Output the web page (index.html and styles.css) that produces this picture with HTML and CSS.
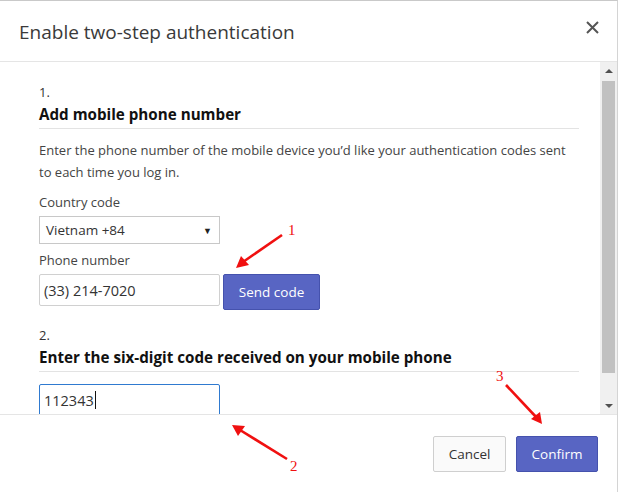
FILE: index.html
```html
<!DOCTYPE html>
<html>
<head>
<meta charset="utf-8">
<link rel="stylesheet" href="styles.css">
</head>
<body>
<div class="modal">
  <div class="modal-header">
    <h1 class="modal-title">Enable two-step authentication</h1>
    <span class="close">
      <svg width="13" height="13" viewBox="0 0 13 13"><path d="M1 1 L12 12 M12 1 L1 12" stroke="#555" stroke-width="2" fill="none"/></svg>
    </span>
  </div>
  <div class="modal-body-wrap">
    <div class="modal-body">
      <div class="step">
        <div class="step-num">1.</div>
        <h2 class="step-title">Add mobile phone number</h2>
        <p class="desc">Enter the phone number of the mobile device you’d like your authentication codes sent to each time you log in.</p>
        <div class="field field-country">
          <label class="label">Country code</label>
          <div class="select"><span>Vietnam +84</span><span class="caret">▼</span></div>
        </div>
        <div class="field field-phone">
          <label class="label">Phone number</label>
          <div class="row">
            <div class="input">(33) 214-7020</div>
            <button class="btn btn-primary btn-send">Send code</button>
          </div>
        </div>
      </div>
      <div class="step step2">
        <div class="step-num">2.</div>
        <h2 class="step-title">Enter the six-digit code received on your mobile phone</h2>
        <div class="input input-focus">112343<span class="cursor"></span></div>
      </div>
    </div>
    <div class="scrollbar">
      <div class="sb-arrow">
        <svg width="8" height="4" viewBox="0 0 8 4"><path d="M0 4 L4 0 L8 4 Z" fill="#505050"/></svg>
      </div>
      <div class="sb-track"><div class="sb-thumb"></div></div>
      <div class="sb-arrow">
        <svg width="8" height="4" viewBox="0 0 8 4"><path d="M0 0 L4 4 L8 0 Z" fill="#505050"/></svg>
      </div>
    </div>
  </div>
  <div class="modal-footer">
    <button class="btn btn-default">Cancel</button>
    <button class="btn btn-primary btn-confirm">Confirm</button>
  </div>
</div>
<svg class="annot" width="619" height="492" viewBox="0 0 619 492">
  <g stroke="#f01010" stroke-width="2.6" fill="#f01010">
    <line x1="282" y1="235" x2="243" y2="262"/>
    <polygon points="236,268 241,256 249,265" stroke="none"/>
    <line x1="287" y1="459" x2="240" y2="430"/>
    <polygon points="232,425 245,426 238,436" stroke="none"/>
    <line x1="506" y1="385" x2="537" y2="418"/>
    <polygon points="542,424 531,419 540,412" stroke="none"/>
  </g>
  <text x="288" y="235" class="num">1</text>
  <text x="290" y="471" class="num">2</text>
  <text x="496" y="381" class="num">3</text>
</svg>
</body>
</html>
```
FILE: styles.css
```css
* { box-sizing: border-box; }
html, body { margin: 0; padding: 0; background: #fff; }
body {
  font-family: "Open Sans", "Noto Sans", sans-serif;
  color: #333;
  width: 619px;
  height: 492px;
  overflow: hidden;
  position: relative;
}
.modal {
  width: 618px;
  height: 500px;
  border-top: 1px solid #c9c9c9;
  border-right: 1px solid #d4d4d4;
  display: flex;
  flex-direction: column;
}
.modal-header {
  height: 61px;
  border-bottom: 1px solid #e5e5e5;
  display: flex;
  align-items: center;
  justify-content: space-between;
  padding: 0 18px 0 19px;
}
.modal-title {
  margin: 0;
  font-size: 19px;
  font-weight: 400;
  color: #3a3a3a;
  position: relative;
  top: 1px;
}
.close { display: flex; position: relative; top: -4px; }
.modal-body-wrap {
  height: 353px;
  display: flex;
  border-bottom: 1px solid #e5e5e5;
}
.modal-body {
  flex: 1;
  overflow: hidden;
  padding: 21px 21px 0 39px;
}
.step-num {
  font-size: 13px;
  line-height: 18px;
  color: #333;
}
.step-title {
  margin: 0;
  font-size: 15.2px;
  font-weight: 700;
  color: #111;
  line-height: 24px;
  padding: 1px 0 2px;
  border-bottom: 1px solid #e3e3e3;
}
.desc {
  margin: 10px 0 0;
  font-size: 13px;
  line-height: 22px;
  color: #444;
}
.field-country { margin-top: 10px; }
.field-phone { margin-top: 7px; }
.label {
  display: block;
  font-size: 13px;
  line-height: 18px;
  color: #444;
  margin-bottom: 5px;
}
.select {
  width: 181px;
  height: 28px;
  border: 1px solid #c8c8c8;
  display: flex;
  align-items: center;
  justify-content: space-between;
  padding: 0 7px 0 6px;
  font-size: 13.5px;
  color: #333;
}
.caret { font-size: 9px; color: #222; }
.row { display: flex; align-items: flex-start; gap: 3px; }
.input {
  width: 181px;
  height: 32px;
  border: 1px solid #d0d0d0;
  border-radius: 2px;
  display: flex;
  align-items: center;
  padding: 0 4px;
  font-size: 14.5px;
  color: #333;
}
.btn {
  font-family: inherit;
  font-size: 13.5px;
  border-radius: 2px;
  height: 36px;
  cursor: pointer;
}
.btn-primary {
  background: #5865c3;
  border: 1px solid #4552ad;
  color: #fff;
}
.btn-send { width: 97px; }
.step2 { margin-top: 16px; }
.step2 .step-title { margin-bottom: 12px; }
.input-focus { border-color: #2f7ad0; }
.cursor {
  display: inline-block;
  width: 1px;
  height: 18px;
  background: #111;
  margin-left: 1px;
}
.scrollbar {
  width: 17px;
  background: #f0f0f0;
  display: flex;
  flex-direction: column;
}
.sb-arrow {
  height: 17px;
  display: flex;
  align-items: center;
  justify-content: center;
}
.sb-track { flex: 1; padding: 0 2px; display: flex; flex-direction: column; }
.sb-thumb { height: 292px; background: #c1c1c1; margin-top: 2px; }
.modal-footer {
  display: flex;
  justify-content: flex-end;
  gap: 10px;
  padding: 21px 19px 0 0;
}
.btn-default {
  width: 73px;
  background: #fafafa;
  border: 1px solid #cfcfcf;
  color: #333;
}
.btn-confirm { width: 82px; }
.annot { position: absolute; left: 0; top: 0; pointer-events: none; }
.num { font-family: "Liberation Serif", serif; font-size: 15px; fill: #f01010; }
```
